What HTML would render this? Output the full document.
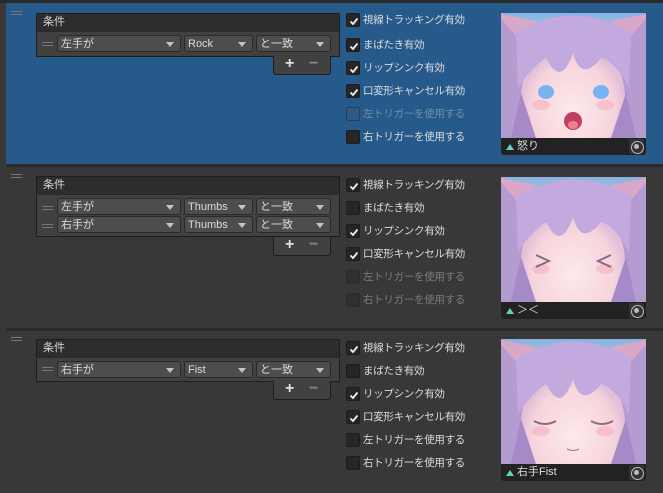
<!DOCTYPE html><html><head><meta charset="utf-8"><style>
*{box-sizing:border-box;margin:0;padding:0}
body{width:663px;height:493px;background:#383838;font-family:"Liberation Sans","Noto Sans CJK JP",sans-serif;font-size:11px;color:#d2d2d2;position:relative;overflow:hidden}
.a{position:absolute}
.sel{left:6px;top:3px;width:657px;height:162px;background:#255a8a}
.sep{left:6px;width:657px;height:3px;background:#2a2a2a}
.grip{width:11px;height:4px;border-top:1px solid #777;border-bottom:1px solid #777}
.hdr{background:#2d2d2d;border:1px solid #1e1e1e;border-bottom:none;padding-left:6px;line-height:17px;color:#d6d6d6;font-size:11px}
.body{background:#414141;border:1px solid #1e1e1e;border-top:1px solid #2a2a2a}
.dd{background:#4d4d4d;border:1px solid #2a2a2a;border-radius:3px;height:17px;line-height:16px;padding-left:3px;color:#dcdcdc;font-size:11px}
.dd:after{content:"";position:absolute;right:6px;top:6px;border-left:4px solid transparent;border-right:4px solid transparent;border-top:5px solid #c4c4c4}
.pm{background:#414141;border:1px solid #1e1e1e;border-top:none;border-radius:0 0 3px 3px;width:58px;height:19px}
.pm b{position:absolute;top:-1px;font-size:16px;font-weight:bold;color:#e0e0e0}
.cb{width:14px;height:14px;background:#262626;border:1px solid #1c1c1c;border-radius:2px}
.cb svg{position:absolute;left:1px;top:1px}
.lb{font-size:10.5px;line-height:14px;color:#dcdcdc;white-space:nowrap;letter-spacing:-0.3px}
.dis{opacity:.4}
.bar{width:145px;height:17px;background:#222;border-radius:0 0 3px 3px;font-size:11px;line-height:17px;color:#ddd;padding-left:16px}
.bar:before{content:"";position:absolute;left:5px;top:6px;border-left:4px solid transparent;border-right:4px solid transparent;border-bottom:6px solid #5fd4c0}
.tgt{right:2px;top:1px;width:15px;height:15px;background:#333;border-radius:2px}
.tgt:before{content:"";position:absolute;left:2px;top:2px;width:11px;height:11px;border:1px solid #bbb;border-radius:50%}
.tgt:after{content:"";position:absolute;left:5px;top:5px;width:5px;height:5px;background:#bbb;border-radius:50%}
</style></head><body>
<div class="a sel"></div>
<div class="a" style="left:0;top:0;width:663px;height:3px;background:#2a2a2a"></div>
<div class="a sep" style="top:164px"></div>
<div class="a sep" style="top:328px"></div>

<div class="a grip" style="left:11px;top:11px"></div>
<div class="a hdr" style="left:36px;top:13px;width:304px;height:18px">条件</div>
<div class="a body" style="left:36px;top:31px;width:304px;height:26px"></div>
<div class="a grip" style="left:42px;top:42px"></div>
<div class="a dd" style="left:57px;top:35px;width:124px">左手が</div>
<div class="a dd" style="left:184px;top:35px;width:69px">Rock</div>
<div class="a dd" style="left:256px;top:35px;width:75px">と一致</div>
<div class="a pm" style="left:273px;top:56px"><b style="left:11px">+</b><b style="left:35px;color:#888">−</b></div>

<div class="a grip" style="left:11px;top:174px"></div>
<div class="a hdr" style="left:36px;top:176px;width:304px;height:18px">条件</div>
<div class="a body" style="left:36px;top:194px;width:304px;height:43px"></div>
<div class="a grip" style="left:42px;top:206px"></div>
<div class="a grip" style="left:42px;top:224px"></div>
<div class="a dd" style="left:57px;top:198px;width:124px">左手が</div>
<div class="a dd" style="left:184px;top:198px;width:69px">Thumbs</div>
<div class="a dd" style="left:256px;top:198px;width:75px">と一致</div>
<div class="a dd" style="left:57px;top:216px;width:124px">右手が</div>
<div class="a dd" style="left:184px;top:216px;width:69px">Thumbs</div>
<div class="a dd" style="left:256px;top:216px;width:75px">と一致</div>
<div class="a pm" style="left:273px;top:237px"><b style="left:11px">+</b><b style="left:35px;color:#888">−</b></div>

<div class="a grip" style="left:11px;top:337px"></div>
<div class="a hdr" style="left:36px;top:339px;width:304px;height:18px">条件</div>
<div class="a body" style="left:36px;top:357px;width:304px;height:25px"></div>
<div class="a grip" style="left:42px;top:367px"></div>
<div class="a dd" style="left:57px;top:361px;width:124px">右手が</div>
<div class="a dd" style="left:184px;top:361px;width:69px">Fist</div>
<div class="a dd" style="left:256px;top:361px;width:75px">と一致</div>
<div class="a pm" style="left:273px;top:381px"><b style="left:11px">+</b><b style="left:35px;color:#888">−</b></div>

<svg width="0" height="0" style="position:absolute"><defs><path id="ck" d="M2.5 6.5L5 9L9.5 3.5" stroke="#eee" stroke-width="1.8" fill="none"/></defs></svg>

<div class="a cb" style="left:346px;top:13px"><svg width="12" height="12"><use href="#ck"/></svg></div><div class="a lb" style="left:363px;top:13px">視線トラッキング有効</div>
<div class="a cb" style="left:346px;top:38px"><svg width="12" height="12"><use href="#ck"/></svg></div><div class="a lb" style="left:363px;top:38px">まばたき有効</div>
<div class="a cb" style="left:346px;top:61px"><svg width="12" height="12"><use href="#ck"/></svg></div><div class="a lb" style="left:363px;top:61px">リップシンク有効</div>
<div class="a cb" style="left:346px;top:84px"><svg width="12" height="12"><use href="#ck"/></svg></div><div class="a lb" style="left:363px;top:84px">口変形キャンセル有効</div>
<div class="a dis"><div class="a cb" style="left:346px;top:107px;background:#3a5a7a"></div><div class="a lb" style="left:363px;top:107px">左トリガーを使用する</div></div>
<div class="a cb" style="left:346px;top:130px"></div><div class="a lb" style="left:363px;top:130px">右トリガーを使用する</div>

<div class="a cb" style="left:346px;top:178px"><svg width="12" height="12"><use href="#ck"/></svg></div><div class="a lb" style="left:363px;top:178px">視線トラッキング有効</div>
<div class="a cb" style="left:346px;top:201px"></div><div class="a lb" style="left:363px;top:201px">まばたき有効</div>
<div class="a cb" style="left:346px;top:224px"><svg width="12" height="12"><use href="#ck"/></svg></div><div class="a lb" style="left:363px;top:224px">リップシンク有効</div>
<div class="a cb" style="left:346px;top:247px"><svg width="12" height="12"><use href="#ck"/></svg></div><div class="a lb" style="left:363px;top:247px">口変形キャンセル有効</div>
<div class="a dis"><div class="a cb" style="left:346px;top:270px"></div><div class="a lb" style="left:363px;top:270px">左トリガーを使用する</div></div>
<div class="a dis"><div class="a cb" style="left:346px;top:293px"></div><div class="a lb" style="left:363px;top:293px">右トリガーを使用する</div></div>

<div class="a cb" style="left:346px;top:341px"><svg width="12" height="12"><use href="#ck"/></svg></div><div class="a lb" style="left:363px;top:341px">視線トラッキング有効</div>
<div class="a cb" style="left:346px;top:364px"></div><div class="a lb" style="left:363px;top:364px">まばたき有効</div>
<div class="a cb" style="left:346px;top:387px"><svg width="12" height="12"><use href="#ck"/></svg></div><div class="a lb" style="left:363px;top:387px">リップシンク有効</div>
<div class="a cb" style="left:346px;top:410px"><svg width="12" height="12"><use href="#ck"/></svg></div><div class="a lb" style="left:363px;top:410px">口変形キャンセル有効</div>
<div class="a cb" style="left:346px;top:433px"></div><div class="a lb" style="left:363px;top:433px">左トリガーを使用する</div>
<div class="a cb" style="left:346px;top:456px"></div><div class="a lb" style="left:363px;top:456px">右トリガーを使用する</div>

<svg class="a" style="left:501px;top:13px" width="145" height="125"><defs>
<radialGradient id="f" cx=".5" cy=".6" r=".5"><stop offset="0" stop-color="#fde9ec"/><stop offset=".8" stop-color="#f6d4dc"/><stop offset="1" stop-color="#e4c0d8"/></radialGradient>
<linearGradient id="bg" x1="0" y1="0" x2="0" y2="1"><stop offset="0" stop-color="#8ab4e0"/><stop offset=".7" stop-color="#cde6f5"/><stop offset="1" stop-color="#7a8a80"/></linearGradient></defs>
<g id="face"><rect width="145" height="125" fill="url(#bg)"/>
<path d="M0 0L35 12L28 60L10 125H0Z M145 0L110 12L117 60L135 125H145Z" fill="#b49bd0"/>
<path d="M-5 0L35 8L30 40Z M150 0L110 8L115 40Z" fill="#d8a8c8"/>
<ellipse cx="72" cy="85" rx="52" ry="60" fill="url(#f)"/>
<path d="M15 20Q72 -15 130 20L128 75Q115 50 100 45Q80 70 72 40Q60 75 45 45Q30 55 17 75Z" fill="#c2aade"/>
<path d="M20 80L10 125H35Z M125 80L135 125H110Z" fill="#a68ac8"/>
<ellipse cx="40" cy="92" rx="9" ry="5" fill="#f5a8b8" opacity=".5"/><ellipse cx="104" cy="92" rx="9" ry="5" fill="#f5a8b8" opacity=".5"/></g>
<ellipse cx="45" cy="79" rx="8" ry="7" fill="#7ab4f0"/><ellipse cx="100" cy="79" rx="8" ry="7" fill="#7ab4f0"/>
<ellipse cx="72" cy="108" rx="9" ry="9" fill="#c04060"/><ellipse cx="72" cy="112" rx="5" ry="4" fill="#f08090"/>
</svg>
<div class="a bar" style="left:501px;top:138px">怒り<div class="a tgt"></div></div>

<svg class="a" style="left:501px;top:177px" width="145" height="125"><use href="#face"/>
<path d="M35 78L48 84L35 90 M110 78L97 84L110 90" stroke="#8a6a80" stroke-width="2" fill="none"/></svg>
<div class="a bar" style="left:501px;top:302px">＞＜<div class="a tgt"></div></div>

<svg class="a" style="left:501px;top:339px" width="145" height="125"><use href="#face"/>
<path d="M33 82Q44 88 55 82 M90 82Q101 88 112 82" stroke="#8a6a80" stroke-width="2" fill="none"/>
<path d="M66 110Q72 113 78 110" stroke="#b07080" fill="none"/></svg>
<div class="a bar" style="left:501px;top:464px">右手Fist<div class="a tgt"></div></div>
</body></html>
